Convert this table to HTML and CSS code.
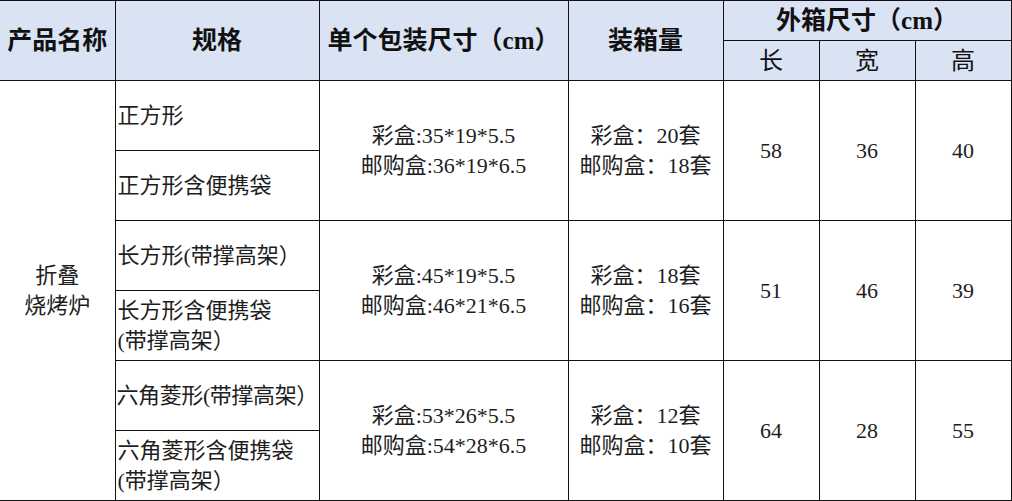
FILE: index.html
```html
<!DOCTYPE html>
<html lang="zh-CN">
<head>
<meta charset="utf-8">
<title>折叠烧烤炉</title>
<link rel="stylesheet" href="styles.css">
</head>
<body>
<table class="spec">
  <colgroup>
    <col class="c-name">
    <col class="c-spec">
    <col class="c-size">
    <col class="c-qty">
    <col class="c-dim">
    <col class="c-dim">
    <col class="c-dim">
  </colgroup>
  <thead>
    <tr class="h-row">
      <th rowspan="2" class="first">产品名称</th>
      <th rowspan="2">规格</th>
      <th rowspan="2">单个包装尺寸（<span class="lat">cm</span>）</th>
      <th rowspan="2">装箱量</th>
      <th colspan="3">外箱尺寸（<span class="lat">cm</span>）</th>
    </tr>
    <tr class="h-row">
      <th class="sub">长</th>
      <th class="sub">宽</th>
      <th class="sub">高</th>
    </tr>
  </thead>
  <tbody>
    <tr class="b-row">
      <td rowspan="6" class="first center">折叠<br>烧烤炉</td>
      <td class="left">正方形</td>
      <td rowspan="2" class="center">彩盒:35*19*5.5<br>邮购盒:36*19*6.5</td>
      <td rowspan="2" class="center">彩盒：20套<br>邮购盒：18套</td>
      <td rowspan="2" class="center">58</td>
      <td rowspan="2" class="center">36</td>
      <td rowspan="2" class="center">40</td>
    </tr>
    <tr class="b-row">
      <td class="left">正方形含便携袋</td>
    </tr>
    <tr class="b-row">
      <td class="left">长方形(带撑高架）</td>
      <td rowspan="2" class="center">彩盒:45*19*5.5<br>邮购盒:46*21*6.5</td>
      <td rowspan="2" class="center">彩盒：18套<br>邮购盒：16套</td>
      <td rowspan="2" class="center">51</td>
      <td rowspan="2" class="center">46</td>
      <td rowspan="2" class="center">39</td>
    </tr>
    <tr class="b-row">
      <td class="left">长方形含便携袋<br>(带撑高架）</td>
    </tr>
    <tr class="b-row">
      <td class="left tight">六角菱形(带撑高架）</td>
      <td rowspan="2" class="center">彩盒:53*26*5.5<br>邮购盒:54*28*6.5</td>
      <td rowspan="2" class="center">彩盒：12套<br>邮购盒：10套</td>
      <td rowspan="2" class="center">64</td>
      <td rowspan="2" class="center">28</td>
      <td rowspan="2" class="center">55</td>
    </tr>
    <tr class="b-row">
      <td class="left">六角菱形含便携袋<br>(带撑高架）</td>
    </tr>
  </tbody>
</table>
</body>
</html>
```

FILE: styles.css
```css
html, body {
  margin: 0;
  padding: 0;
  background: #ffffff;
}

.spec {
  border-collapse: collapse;
  table-layout: fixed;
  width: 1011px;
  font-family: "Liberation Serif", "Noto Sans CJK SC", serif;
  color: #1e1e1e;
}

.c-name { width: 115px; }
.c-spec { width: 204px; }
.c-size { width: 249px; }
.c-qty { width: 155px; }
.c-dim { width: 96px; }

.spec th,
.spec td {
  border: 1px solid #111111;
  padding: 0;
  overflow: hidden;
  white-space: nowrap;
}

.spec .first {
  border-left: none;
}

.h-row {
  height: 40px;
}

.spec th {
  background: #dae3f3;
  font-size: 25px;
  font-weight: 700;
  text-align: center;
  vertical-align: middle;
  color: #111111;
  line-height: 28px;
}

.spec th.sub {
  font-weight: 400;
  font-size: 24px;
}

.lat {
  font-family: "Liberation Serif", serif;
  font-weight: 700;
}

.b-row {
  height: 70px;
}

.spec td {
  font-size: 22px;
  line-height: 30px;
  vertical-align: middle;
  font-weight: 400;
}

.spec td.center {
  text-align: center;
}

.spec td.left {
  text-align: left;
  padding-left: 2px;
}

.spec td.tight {
  padding-left: 1px;
  letter-spacing: -0.4px;
}
```
